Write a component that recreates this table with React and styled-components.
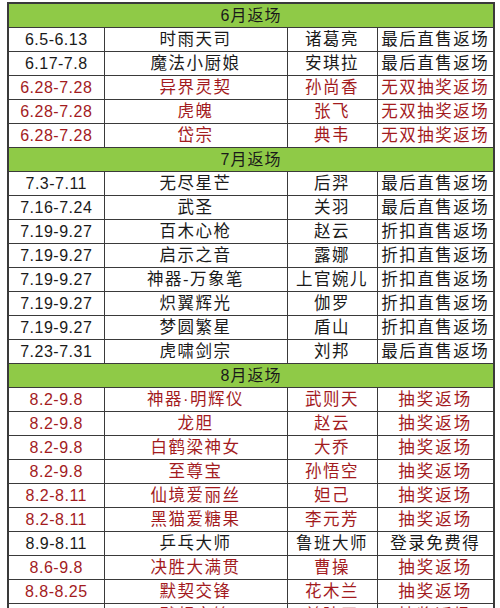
import React from "react";
import styled, { createGlobalStyle } from "styled-components";

const GlobalStyle = createGlobalStyle`
  html, body {
    margin: 0;
    padding: 0;
    background: #fff;
  }
  body {
    font-family: "Liberation Sans", "Noto Sans CJK SC", sans-serif;
  }
`;

const sections = [
  {
    title: "6月返场",
    rows: [
      ["6.5-6.13", "时雨天司", "诸葛亮", "最后直售返场", false],
      ["6.17-7.8", "魔法小厨娘", "安琪拉", "最后直售返场", false],
      ["6.28-7.28", "异界灵契", "孙尚香", "无双抽奖返场", true],
      ["6.28-7.28", "虎魄", "张飞", "无双抽奖返场", true],
      ["6.28-7.28", "岱宗", "典韦", "无双抽奖返场", true],
    ],
  },
  {
    title: "7月返场",
    rows: [
      ["7.3-7.11", "无尽星芒", "后羿", "最后直售返场", false],
      ["7.16-7.24", "武圣", "关羽", "最后直售返场", false],
      ["7.19-9.27", "百木心枪", "赵云", "折扣直售返场", false],
      ["7.19-9.27", "启示之音", "露娜", "折扣直售返场", false],
      ["7.19-9.27", "神器-万象笔", "上官婉儿", "折扣直售返场", false],
      ["7.19-9.27", "炽翼辉光", "伽罗", "折扣直售返场", false],
      ["7.19-9.27", "梦圆繁星", "盾山", "折扣直售返场", false],
      ["7.23-7.31", "虎啸剑宗", "刘邦", "最后直售返场", false],
    ],
  },
  {
    title: "8月返场",
    rows: [
      ["8.2-9.8", "神器·明辉仪", "武则天", "抽奖返场", true],
      ["8.2-9.8", "龙胆", "赵云", "抽奖返场", true],
      ["8.2-9.8", "白鹤梁神女", "大乔", "抽奖返场", true],
      ["8.2-9.8", "至尊宝", "孙悟空", "抽奖返场", true],
      ["8.2-8.11", "仙境爱丽丝", "妲己", "抽奖返场", true],
      ["8.2-8.11", "黑猫爱糖果", "李元芳", "抽奖返场", true],
      ["8.9-8.11", "乒乓大师", "鲁班大师", "登录免费得", false],
      ["8.6-9.8", "决胜大满贯", "曹操", "抽奖返场", true],
      ["8.8-8.25", "默契交锋", "花木兰", "抽奖返场", true],
      ["8.8-8.25", "默契交锋", "兰陵王", "抽奖返场", true],
    ],
  },
];

const colWidths = [96, 183, 90, 117];

const Page = styled.div`
  padding: 2px 0 0 7px;
  height: 608px;
  overflow: hidden;
  box-sizing: border-box;
`;

const Table = styled.table`
  border-collapse: collapse;
  width: 486px;
  table-layout: fixed;
  border: 2px solid #3a3a3a;
`;

const Col = styled.col`
  width: ${(p) => p.$w}px;
`;

const HeaderCell = styled.td`
  background: #8fca47;
  height: 23px;
  padding: 0;
  border: 1px solid #3a3a3a;
  text-align: center;
  font-size: 16px;
  letter-spacing: 1px;
  color: #1a1a1a;
  line-height: 1;
`;

const Cell = styled.td`
  height: 23px;
  padding: 0;
  border: 1px solid #3a3a3a;
  text-align: center;
  white-space: nowrap;
  overflow: hidden;
  line-height: 1;
  color: ${(p) => (p.$red ? "#a31b1e" : "#1a1a1a")};
  font-size: ${(p) => (p.$date ? "16px" : "16.5px")};
  letter-spacing: ${(p) => (p.$date ? "0.5px" : p.$wide ? "2px" : "1.5px")};
`;

export default function App() {
  return (
    <Page>
      <GlobalStyle />
      <Table>
        <colgroup>
          {colWidths.map((w, i) => (
            <Col key={i} $w={w} />
          ))}
        </colgroup>
        <tbody>
          {sections.map((s) => (
            <React.Fragment key={s.title}>
              <tr>
                <HeaderCell colSpan={4}>{s.title}</HeaderCell>
              </tr>
              {s.rows.map(([date, skin, hero, note, red], i) => (
                <tr key={s.title + i}>
                  <Cell $date $red={red}>{date}</Cell>
                  <Cell $red={red}>{skin}</Cell>
                  <Cell $red={red}>{hero}</Cell>
                  <Cell $red={red} $wide={note.length === 4}>
                    {note}
                  </Cell>
                </tr>
              ))}
            </React.Fragment>
          ))}
        </tbody>
      </Table>
    </Page>
  );
}
